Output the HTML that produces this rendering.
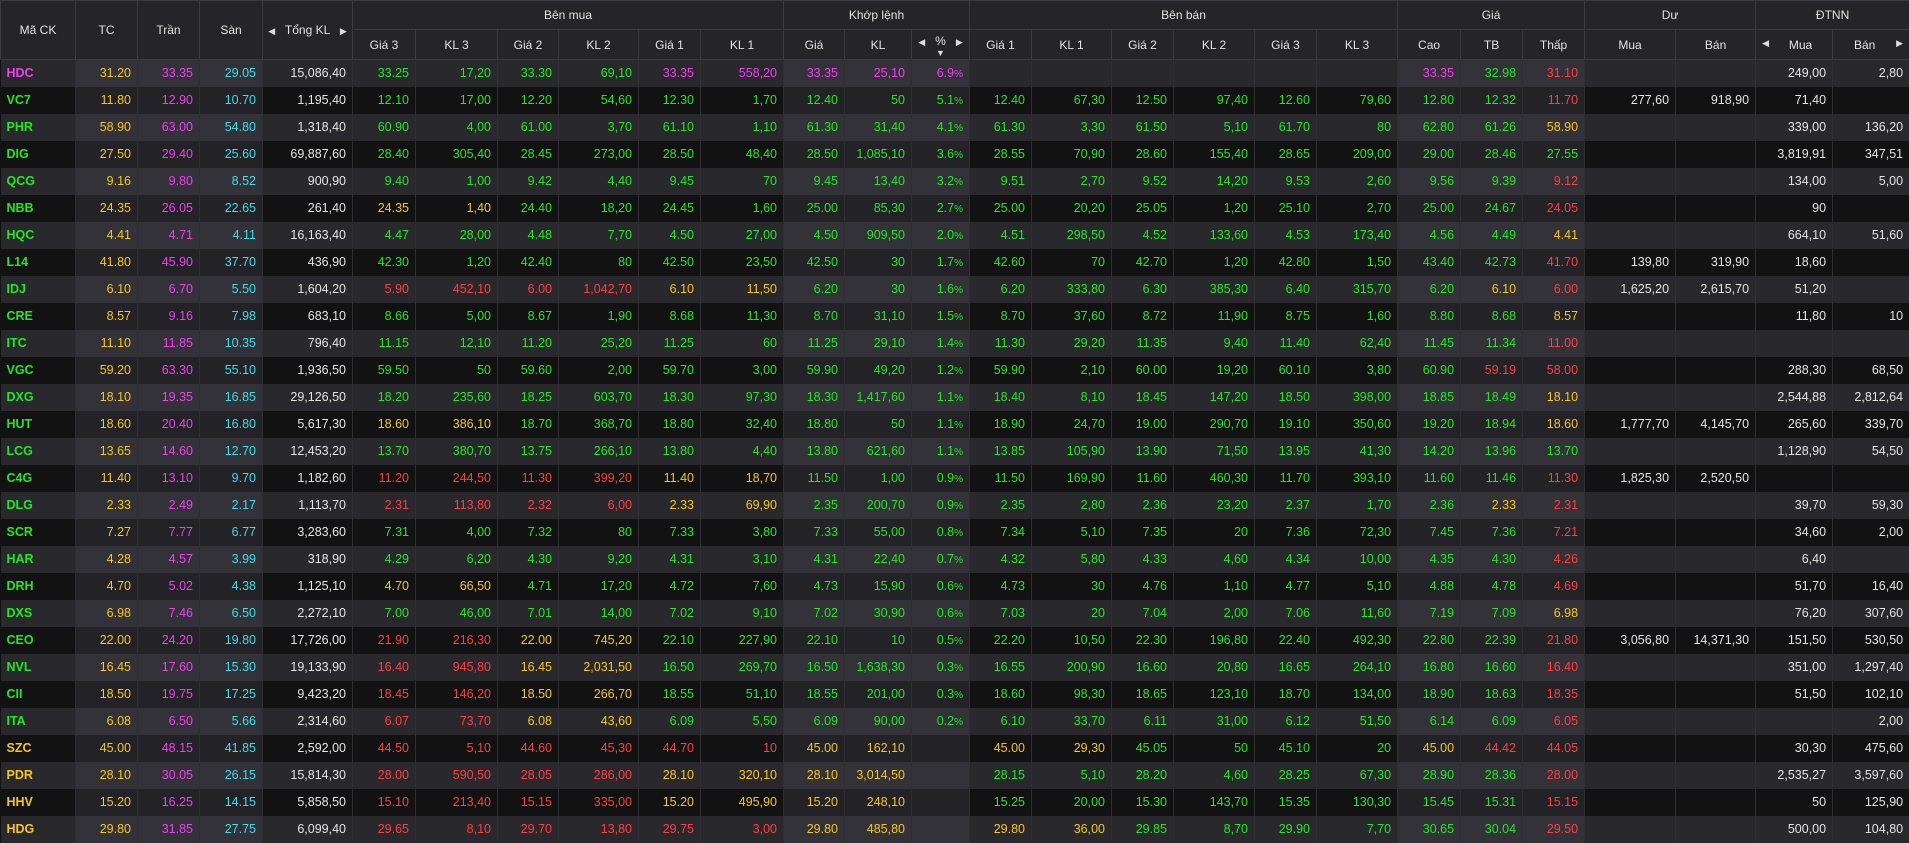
<!DOCTYPE html>
<html><head><meta charset="utf-8">
<style>
*{margin:0;padding:0;box-sizing:border-box}
body{width:1909px;height:843px;background:#121212;overflow:hidden;font-family:"Liberation Sans",Arial,sans-serif;}
table{border-collapse:collapse;table-layout:fixed;width:1909px}
th{background:#252529;color:#e2e2e2;font-weight:normal;font-size:12px;border:1px solid #3a3a40;text-align:center;}
thead tr.a th{height:29px}
thead tr.b th{height:30px}
td{height:27px;font-size:12.5px;text-align:right;padding-right:6px;border-right:1px solid #2e2e33;white-space:nowrap;overflow:hidden}
tr.o td{background:#28282d}
tr.e td{background:#121212}
tr.o td.s{background:#323238}
tr.e td.s{background:#222227}
td.t{text-align:left;padding-left:6px;font-weight:bold;font-size:12.5px}
.y{color:#f5c61e}.m{color:#f23ef2}.c{color:#3fdde6}.g{color:#22e822}.r{color:#ff3f3f}.w{color:#e4e4e4}
.ar{font-size:9px;color:#ddd}
small{font-size:10px}
</style></head><body>
<table>
<colgroup>
<col style="width:75px"><col style="width:62px"><col style="width:62px"><col style="width:63px"><col style="width:90px">
<col style="width:63px"><col style="width:82px"><col style="width:61px"><col style="width:80px"><col style="width:62px"><col style="width:83px">
<col style="width:61px"><col style="width:67px"><col style="width:58px">
<col style="width:62px"><col style="width:80px"><col style="width:62px"><col style="width:81px"><col style="width:62px"><col style="width:81px">
<col style="width:63px"><col style="width:62px"><col style="width:62px">
<col style="width:91px"><col style="width:80px"><col style="width:77px"><col style="width:77px">
</colgroup>
<thead>
<tr class="a"><th rowspan="2">Mã CK</th><th rowspan="2">TC</th><th rowspan="2">Trần</th><th rowspan="2">Sàn</th><th rowspan="2"><span class="ar">◀</span>&nbsp;&nbsp; Tổng KL &nbsp;&nbsp;<span class="ar">▶</span></th>
<th colspan="6">Bên mua</th><th colspan="3">Khớp lệnh</th><th colspan="6">Bên bán</th><th colspan="3">Giá</th><th colspan="2">Dư</th><th colspan="2">ĐTNN</th></tr>
<tr class="b"><th>Giá 3</th><th>KL 3</th><th>Giá 2</th><th>KL 2</th><th>Giá 1</th><th>KL 1</th><th>Giá</th><th>KL</th><th style="line-height:10px;padding-top:4px"><span class="ar">◀</span>&nbsp;&nbsp; % &nbsp;&nbsp;<span class="ar">▶</span><br><span class="ar">▼</span></th>
<th>Giá 1</th><th>KL 1</th><th>Giá 2</th><th>KL 2</th><th>Giá 3</th><th>KL 3</th><th>Cao</th><th>TB</th><th>Thấp</th><th>Mua</th><th>Bán</th><th><span class="ar" style="float:left;margin-left:6px">◀</span>Mua</th><th>Bán<span class="ar" style="float:right;margin-right:6px">▶</span></th></tr>
</thead>
<tbody id="b"></tbody>
</table>
<script>
var D=[
"HDC|31.20|33.35|29.05|15,086,40|33.25|17,20|33.30|69,10|33.35|558,20|33.35|25,10|6.9|||||||33.35|32.98|31.10|||249,00|2,80",
"VC7|11.80|12.90|10.70|1,195,40|12.10|17,00|12.20|54,60|12.30|1,70|12.40|50|5.1|12.40|67,30|12.50|97,40|12.60|79,60|12.80|12.32|11.70|277,60|918,90|71,40|",
"PHR|58.90|63.00|54.80|1,318,40|60.90|4,00|61.00|3,70|61.10|1,10|61.30|31,40|4.1|61.30|3,30|61.50|5,10|61.70|80|62.80|61.26|58.90|||339,00|136,20",
"DIG|27.50|29.40|25.60|69,887,60|28.40|305,40|28.45|273,00|28.50|48,40|28.50|1,085,10|3.6|28.55|70,90|28.60|155,40|28.65|209,00|29.00|28.46|27.55|||3,819,91|347,51",
"QCG|9.16|9.80|8.52|900,90|9.40|1,00|9.42|4,40|9.45|70|9.45|13,40|3.2|9.51|2,70|9.52|14,20|9.53|2,60|9.56|9.39|9.12|||134,00|5,00",
"NBB|24.35|26.05|22.65|261,40|24.35|1,40|24.40|18,20|24.45|1,60|25.00|85,30|2.7|25.00|20,20|25.05|1,20|25.10|2,70|25.00|24.67|24.05|||90|",
"HQC|4.41|4.71|4.11|16,163,40|4.47|28,00|4.48|7,70|4.50|27,00|4.50|909,50|2.0|4.51|298,50|4.52|133,60|4.53|173,40|4.56|4.49|4.41|||664,10|51,60",
"L14|41.80|45.90|37.70|436,90|42.30|1,20|42.40|80|42.50|23,50|42.50|30|1.7|42.60|70|42.70|1,20|42.80|1,50|43.40|42.73|41.70|139,80|319,90|18,60|",
"IDJ|6.10|6.70|5.50|1,604,20|5.90|452,10|6.00|1,042,70|6.10|11,50|6.20|30|1.6|6.20|333,80|6.30|385,30|6.40|315,70|6.20|6.10|6.00|1,625,20|2,615,70|51,20|",
"CRE|8.57|9.16|7.98|683,10|8.66|5,00|8.67|1,90|8.68|11,30|8.70|31,10|1.5|8.70|37,60|8.72|11,90|8.75|1,60|8.80|8.68|8.57|||11,80|10",
"ITC|11.10|11.85|10.35|796,40|11.15|12,10|11.20|25,20|11.25|60|11.25|29,10|1.4|11.30|29,20|11.35|9,40|11.40|62,40|11.45|11.34|11.00||||",
"VGC|59.20|63.30|55.10|1,936,50|59.50|50|59.60|2,00|59.70|3,00|59.90|49,20|1.2|59.90|2,10|60.00|19,20|60.10|3,80|60.90|59.19|58.00|||288,30|68,50",
"DXG|18.10|19.35|16.85|29,126,50|18.20|235,60|18.25|603,70|18.30|97,30|18.30|1,417,60|1.1|18.40|8,10|18.45|147,20|18.50|398,00|18.85|18.49|18.10|||2,544,88|2,812,64",
"HUT|18.60|20.40|16.80|5,617,30|18.60|386,10|18.70|368,70|18.80|32,40|18.80|50|1.1|18.90|24,70|19.00|290,70|19.10|350,60|19.20|18.94|18.60|1,777,70|4,145,70|265,60|339,70",
"LCG|13.65|14.60|12.70|12,453,20|13.70|380,70|13.75|266,10|13.80|4,40|13.80|621,60|1.1|13.85|105,90|13.90|71,50|13.95|41,30|14.20|13.96|13.70|||1,128,90|54,50",
"C4G|11.40|13.10|9.70|1,182,60|11.20|244,50|11.30|399,20|11.40|18,70|11.50|1,00|0.9|11.50|169,90|11.60|460,30|11.70|393,10|11.60|11.46|11.30|1,825,30|2,520,50||",
"DLG|2.33|2.49|2.17|1,113,70|2.31|113,80|2.32|6,00|2.33|69,90|2.35|200,70|0.9|2.35|2,80|2.36|23,20|2.37|1,70|2.36|2.33|2.31|||39,70|59,30",
"SCR|7.27|7.77|6.77|3,283,60|7.31|4,00|7.32|80|7.33|3,80|7.33|55,00|0.8|7.34|5,10|7.35|20|7.36|72,30|7.45|7.36|7.21|||34,60|2,00",
"HAR|4.28|4.57|3.99|318,90|4.29|6,20|4.30|9,20|4.31|3,10|4.31|22,40|0.7|4.32|5,80|4.33|4,60|4.34|10,00|4.35|4.30|4.26|||6,40|",
"DRH|4.70|5.02|4.38|1,125,10|4.70|66,50|4.71|17,20|4.72|7,60|4.73|15,90|0.6|4.73|30|4.76|1,10|4.77|5,10|4.88|4.78|4.69|||51,70|16,40",
"DXS|6.98|7.46|6.50|2,272,10|7.00|46,00|7.01|14,00|7.02|9,10|7.02|30,90|0.6|7.03|20|7.04|2,00|7.06|11,60|7.19|7.09|6.98|||76,20|307,60",
"CEO|22.00|24.20|19.80|17,726,00|21.90|216,30|22.00|745,20|22.10|227,90|22.10|10|0.5|22.20|10,50|22.30|196,80|22.40|492,30|22.80|22.39|21.80|3,056,80|14,371,30|151,50|530,50",
"NVL|16.45|17.60|15.30|19,133,90|16.40|945,80|16.45|2,031,50|16.50|269,70|16.50|1,638,30|0.3|16.55|200,90|16.60|20,80|16.65|264,10|16.80|16.60|16.40|||351,00|1,297,40",
"CII|18.50|19.75|17.25|9,423,20|18.45|146,20|18.50|266,70|18.55|51,10|18.55|201,00|0.3|18.60|98,30|18.65|123,10|18.70|134,00|18.90|18.63|18.35|||51,50|102,10",
"ITA|6.08|6.50|5.66|2,314,60|6.07|73,70|6.08|43,60|6.09|5,50|6.09|90,00|0.2|6.10|33,70|6.11|31,00|6.12|51,50|6.14|6.09|6.05||||2,00",
"SZC|45.00|48.15|41.85|2,592,00|44.50|5,10|44.60|45,30|44.70|10|45.00|162,10||45.00|29,30|45.05|50|45.10|20|45.00|44.42|44.05|||30,30|475,60",
"PDR|28.10|30.05|26.15|15,814,30|28.00|590,50|28.05|286,00|28.10|320,10|28.10|3,014,50||28.15|5,10|28.20|4,60|28.25|67,30|28.90|28.36|28.00|||2,535,27|3,597,60",
"HHV|15.20|16.25|14.15|5,858,50|15.10|213,40|15.15|335,00|15.20|495,90|15.20|248,10||15.25|20,00|15.30|143,70|15.35|130,30|15.45|15.31|15.15|||50|125,90",
"HDG|29.80|31.85|27.75|6,099,40|29.65|8,10|29.70|13,80|29.75|3,00|29.80|485,80||29.80|36,00|29.85|8,70|29.90|7,70|30.65|30.04|29.50|||500,00|104,80"
];
var shade={1:1,2:1,3:1,11:1,12:1,13:1,20:1,21:1,22:1};
var h="";
D.forEach(function(line,i){
 var f=line.split("|"),tc=+f[1],ce=+f[2],fl=+f[3];
 function col(p){if(p==="")return "w";p=+p;if(p==ce)return "m";if(p==fl)return "c";if(p==tc)return "y";return p>tc?"g":"r";}
 var pc={5:5,6:5,7:7,8:7,9:9,10:9,11:11,12:11,13:11,14:14,15:14,16:16,17:16,18:18,19:18,20:20,21:21,22:22};
 h+='<tr class="'+(i%2?'e':'o')+'">';
 for(var k=0;k<27;k++){
  var c,v=f[k]||"",cls=shade[k]?"s ":"";
  if(k==0){c=col(f[11]);h+='<td class="t '+c+'">'+v+'</td>';continue;}
  if(k==1)c="y";else if(k==2)c="m";else if(k==3)c="c";
  else if(pc[k])c=col(f[pc[k]]);else c="w";
  if(k==13&&v)v=v+'<small>%</small>';
  h+='<td class="'+cls+c+'">'+v+'</td>';
 }
 h+='</tr>';
});
document.getElementById("b").innerHTML=h;
</script>
</body></html>
